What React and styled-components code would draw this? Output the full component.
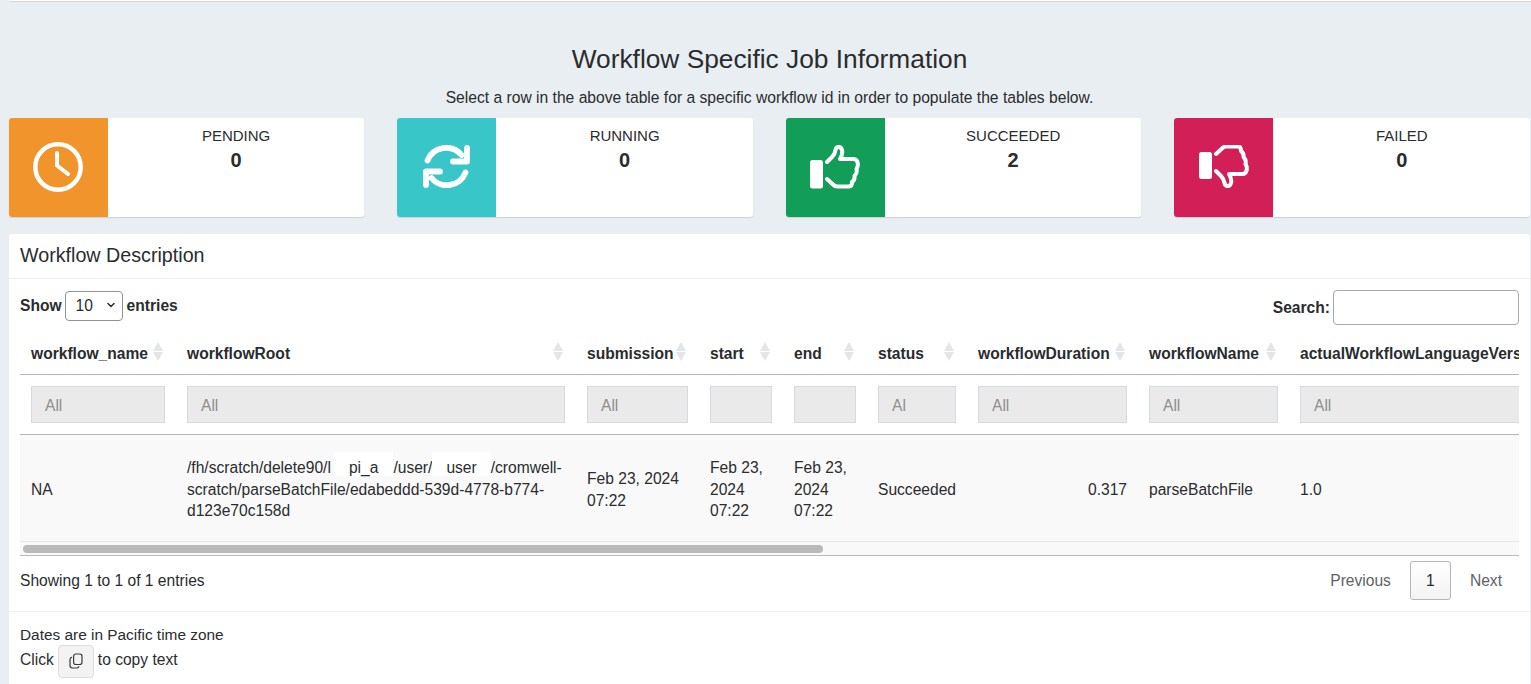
import React from "react";
import styled, { createGlobalStyle } from "styled-components";
import { LuChevronDown } from "react-icons/lu";

const GlobalStyle = createGlobalStyle`
    html, body {
        margin: 0;
        height: 100%;
        overflow: hidden;
    }
    body {
        background-color: #e9eef2;
        color: #2a2c2e;
        font-family: "Liberation Sans", Arial, sans-serif;
        font-size: 15.6px;
        line-height: 21px;
    }
`
const Page = styled.div`
    height: 684px;
    display: flex;
    flex-direction: column;
    padding: 0 1px 0 9px;
    box-sizing: border-box;
`
const TopRule = styled.hr`
    height: 0;
    margin: 0 -1px 0 1px;
    border: 0;
    border-top: 1px solid white;
    border-bottom: 1px solid #d3d6d9;
`
const Title = styled.h2`
    margin: 41px 0 0;
    font-size: 26.3px;
    line-height: 32px;
    font-weight: 400;
    text-align: center;
`
const Subtitle = styled.p`
    margin: 12px 0 0;
    font-size: 15.65px;
    text-align: center;
    line-height: 21px;
`
const Cards = styled.div`
    margin: 10px 0 0 -0.2px;
    display: grid;
    grid-template-columns: repeat(4, 1fr);
    column-gap: 33px;
`
const Card = styled.div`
    height: 99px;
    display: flex;
    background-color: white;
    border-radius: 3px;
    overflow: hidden;
    box-shadow: 0 1px 1px rgba(0, 0, 0, 0.12);
`
const CardIcon = styled.div`
    width: 99px;
    flex-shrink: 0;
    box-sizing: border-box;
    padding-bottom: 2px;
    display: flex;
    align-items: center;
    justify-content: center;
    background-color: ${props => props.$color};
    color: white;
`
const CardText = styled.div`
    flex: 1;
    padding-top: 7px;
    text-align: center;
`
const CardLabel = styled.div`
    font-size: 15px;
    line-height: 21px;
`
const CardValue = styled.div`
    font-size: 20px;
    line-height: 28px;
    font-weight: 700;
`
const Panel = styled.section`
    margin-top: 17px;
    flex: 1;
    min-height: 0;
    background-color: white;
    border-radius: 3px 3px 0 0;
    display: flex;
    flex-direction: column;
`
const PanelHeader = styled.h3`
    margin: 0;
    height: 45px;
    box-sizing: border-box;
    padding: 10px 11px 0;
    border-bottom: 1px solid #eceef0;
    font-size: 19.7px;
    line-height: 23px;
    font-weight: 400;
`
const PanelBody = styled.div`
    padding: 11px 11px 0;
`
const Controls = styled.div`
    display: flex;
    justify-content: space-between;
    height: 43px;
`
const ControlLabel = styled.label`
    display: flex;
    align-items: flex-start;
    gap: 4px;
    font-weight: 700;
    line-height: ${props => props.$lineHeight}px;
`
const SelectWrap = styled.span`
    position: relative;
    display: inline-block;
    height: 30px;
    margin-left: -1px;
`
const PageSelect = styled.select`
    appearance: none;
    width: 58px;
    height: 30px;
    padding: 0 0 0 10px;
    background-color: white;
    border: 1px solid #8f9396;
    border-radius: 4px;
    color: #2a2c2e;
    font-family: inherit;
    font-size: 15.6px;
`
const SelectArrow = styled(LuChevronDown)`
    position: absolute;
    right: 6px;
    top: 9px;
    font-size: 12px;
    stroke-width: 3;
    pointer-events: none;
`
const SearchInput = styled.input`
    width: 186px;
    height: 35px;
    margin-left: -1px;
    box-sizing: border-box;
    border: 1px solid #a6aaad;
    border-radius: 4px;
`
const TableClip = styled.div`
    overflow: hidden;
`
const Table = styled.table`
    width: 2788px;
    table-layout: fixed;
    border-collapse: collapse;
    background-color: white;
`
const Th = styled.th`
    position: relative;
    height: 41px;
    padding: 0 11px;
    box-sizing: border-box;
    border-bottom: 1px solid #b4b5b6;
    text-align: left;
    font-weight: 700;
    white-space: nowrap;
`
const SortMark = styled.span`
    position: absolute;
    right: 13px;
    top: 9px;
    width: 0;
    &::before, &::after {
        content: "";
        position: absolute;
        right: 0;
        border-left: 5px solid transparent;
        border-right: 5px solid transparent;
    }
    &::before {
        top: 0;
        border-bottom: 9px solid #e3e5e6;
    }
    &::after {
        top: 10px;
        border-top: 9px solid #e3e5e6;
    }
`
const FilterCell = styled.td`
    height: 60px;
    padding: 0 11px;
    box-sizing: border-box;
    border-bottom: 1px solid #b4b5b6;
`
const FilterInput = styled.input`
    display: block;
    width: 100%;
    height: 37px;
    box-sizing: border-box;
    padding: 3px 13px 0;
    background-color: #eaeaea;
    border: 1px solid #d5dae0;
    font-family: inherit;
    font-size: 15.6px;
    &::placeholder {
        color: #8e8e8e;
        opacity: 1;
    }
`
const Td = styled.td`
    height: 107px;
    padding: 4px 11px 0;
    box-sizing: border-box;
    background-color: #f9f9f9;
    border-bottom: 1px solid #e6e7e8;
    line-height: 21.5px;
    text-align: ${props => props.$align || "left"};
    vertical-align: middle;
`
const PathLine = styled.span`
    display: block;
    white-space: nowrap;
`
const Redacted = styled.span`
    margin-left: ${props => props.$shift}px;
    padding: 7px ${props => props.$pad}px 0;
    background-color: white;
`
const ScrollTrack = styled.div`
    height: 14px;
    box-sizing: border-box;
    padding: 3px 0 0 3px;
    background-color: #f9f9f9;
    border-bottom: 1px solid #b9babb;
`
const ScrollThumb = styled.div`
    width: 800px;
    height: 8px;
    background-color: #bababa;
    border-radius: 4px;
`
const Bottom = styled.div`
    height: 55px;
    display: flex;
    justify-content: space-between;
    align-items: flex-start;
    padding-top: 14px;
    box-sizing: border-box;
`
const Pager = styled.div`
    display: flex;
    align-items: center;
    margin: -9px -2px 0 0;
    color: #5e6265;
`
const PagerLink = styled.span`
    padding: 1px 19px 0 ${props => props.$left}px;
`
const PagerCurrent = styled.span`
    width: 41px;
    height: 39px;
    box-sizing: border-box;
    display: flex;
    align-items: center;
    justify-content: center;
    color: #2a2c2e;
    background: linear-gradient(#ffffff, #f3f3f3);
    border: 1px solid #b5b5b5;
    border-radius: 3px;
`
const Footer = styled.div`
    border-top: 1px solid #eef0f1;
    padding: 12px 11px 0;
`
const TimeZoneNote = styled.div`
    font-size: 15.4px;
`
const CopyLine = styled.div`
    display: flex;
    align-items: flex-start;
    gap: 4px;
    line-height: 29px;
`
const CopyButton = styled.button`
    width: 36px;
    height: 33px;
    padding: 0;
    display: flex;
    align-items: center;
    justify-content: center;
    background-color: #f3f3f3;
    border: 1px solid #dcdcdc;
    border-radius: 4px;
    color: #3a3c3e;
`

function ClockIcon(){
    return(
        <svg width="50" height="50" viewBox="0 0 50 50" fill="none" stroke="currentColor" strokeLinecap="round" strokeLinejoin="round">
            <circle cx="25" cy="25" r="22.7" strokeWidth="4.5"/>
            <path d="M24 11V23.5L35 32" strokeWidth="4"/>
        </svg>
    )
}

function SyncIcon(){
    return(
        <svg width="47" height="43" viewBox="0 0 47 43" fill="none" stroke="currentColor" strokeWidth="5.8" strokeLinecap="round" strokeLinejoin="round">
            <path d="M4.5 15.5A20 20 0 0 1 38.5 10"/>
            <path d="M44 3V16.5H30"/>
            <path d="M42.5 27.5A20 20 0 0 1 8.5 33"/>
            <path d="M3 40V26.5H17"/>
        </svg>
    )
}

function ThumbIcon({ down }){
    return(
        <svg width="50" height="44" viewBox="0 0 50 44" fill="none" stroke="currentColor" strokeWidth="4" strokeLinecap="round" strokeLinejoin="round">
            <rect x="0" y={down ? 7 : 15} width="13" height={down ? 27 : 28.5} rx="2.5" fill="currentColor" stroke="none"/>
            <g transform={down ? "translate(0 43) scale(1 -1)" : undefined}>
                <path d="M17 34L23 39.5Q25 41.5 27 41.5H39Q42 41.5 42 37Q45 35 44.5 31Q47.5 28 46.5 24Q49 20 47 16Q46 14 43 14H30Q33 9 32 5Q31 1.5 28 2Q26 2.5 25.5 5Q25 9 22 12L17 17"/>
            </g>
        </svg>
    )
}

function CopyIcon(){
    return(
        <svg width="14" height="16" viewBox="0 0 14 16" fill="none" stroke="currentColor" strokeWidth="1.2" strokeLinecap="round">
            <rect x="4.6" y="1" width="8.4" height="10.5" rx="2.2"/>
            <path d="M2.6 4.4Q1 4.8 1 6.6V12.6Q1 15 3.4 15H7.4Q9.4 15 9.8 13.6"/>
        </svg>
    )
}

const statusCards = [
    { label: "PENDING", value: 0, color: "#f2942c", icon: <ClockIcon/> },
    { label: "RUNNING", value: 0, color: "#39c6c8", icon: <SyncIcon/> },
    { label: "SUCCEEDED", value: 2, color: "#129d58", icon: <ThumbIcon/> },
    { label: "FAILED", value: 0, color: "#d31f57", icon: <ThumbIcon down/> },
];

const columns = [
    { name: "workflow_name", width: 156 },
    { name: "workflowRoot", width: 400 },
    { name: "submission", width: 123 },
    { name: "start", width: 84, blank: true },
    { name: "end", width: 84, blank: true },
    { name: "status", width: 100 },
    { name: "workflowDuration", width: 171 },
    { name: "workflowName", width: 151 },
    { name: "actualWorkflowLanguageVersion", width: 1519, noSort: true },
];

export default function App(){
    return(
        <>
            <GlobalStyle/>
            <Page>
                <TopRule/>
                <Title>Workflow Specific Job Information</Title>
                <Subtitle>Select a row in the above table for a specific workflow id in order to populate the tables below.</Subtitle>
                <Cards>
                    {statusCards.map(({ label, value, color, icon }) => (
                        <Card key={label}>
                            <CardIcon $color={color}>{icon}</CardIcon>
                            <CardText>
                                <CardLabel>{label}</CardLabel>
                                <CardValue>{value}</CardValue>
                            </CardText>
                        </Card>
                    ))}
                </Cards>
                <Panel>
                    <PanelHeader>Workflow Description</PanelHeader>
                    <PanelBody>
                        <Controls>
                            <ControlLabel $lineHeight={31}>
                                Show
                                <SelectWrap>
                                    <PageSelect defaultValue="10">
                                        <option>10</option>
                                        <option>25</option>
                                        <option>50</option>
                                    </PageSelect>
                                    <SelectArrow/>
                                </SelectWrap>
                                entries
                            </ControlLabel>
                            <ControlLabel $lineHeight={35}>
                                Search:
                                <SearchInput type="text"/>
                            </ControlLabel>
                        </Controls>
                        <TableClip>
                            <Table>
                                <colgroup>
                                    {columns.map(col => <col key={col.name} style={{ width: col.width }}/>)}
                                </colgroup>
                                <thead>
                                    <tr>
                                        {columns.map(col => (
                                            <Th key={col.name}>{col.name}{!col.noSort && <SortMark/>}</Th>
                                        ))}
                                    </tr>
                                    <tr>
                                        {columns.map(col => (
                                            <FilterCell key={col.name}>
                                                <FilterInput placeholder={col.blank ? "" : col.name === "status" ? "Al" : "All"}/>
                                            </FilterCell>
                                        ))}
                                    </tr>
                                </thead>
                                <tbody>
                                    <tr>
                                        <Td>NA</Td>
                                        <Td>
                                            <PathLine>/fh/scratch/delete90/l<Redacted $pad={15} $shift={3}>pi_a</Redacted>/user/<Redacted $pad={14} $shift={0}>user</Redacted>/cromwell-</PathLine>
                                            scratch/parseBatchFile/edabeddd-539d-4778-b774-d123e70c158d
                                        </Td>
                                        <Td>Feb 23, 2024 07:22</Td>
                                        <Td>Feb 23, 2024 07:22</Td>
                                        <Td>Feb 23, 2024 07:22</Td>
                                        <Td>Succeeded</Td>
                                        <Td $align="right">0.317</Td>
                                        <Td>parseBatchFile</Td>
                                        <Td>1.0</Td>
                                    </tr>
                                </tbody>
                            </Table>
                        </TableClip>
                        <ScrollTrack><ScrollThumb/></ScrollTrack>
                        <Bottom>
                            <span>Showing 1 to 1 of 1 entries</span>
                            <Pager>
                                <PagerLink $left={19}>Previous</PagerLink>
                                <PagerCurrent>1</PagerCurrent>
                                <PagerLink $left={19}>Next</PagerLink>
                            </Pager>
                        </Bottom>
                    </PanelBody>
                    <Footer>
                        <TimeZoneNote>Dates are in Pacific time zone</TimeZoneNote>
                        <CopyLine>Click <CopyButton type="button"><CopyIcon/></CopyButton> to copy text</CopyLine>
                    </Footer>
                </Panel>
            </Page>
        </>
    )
};
